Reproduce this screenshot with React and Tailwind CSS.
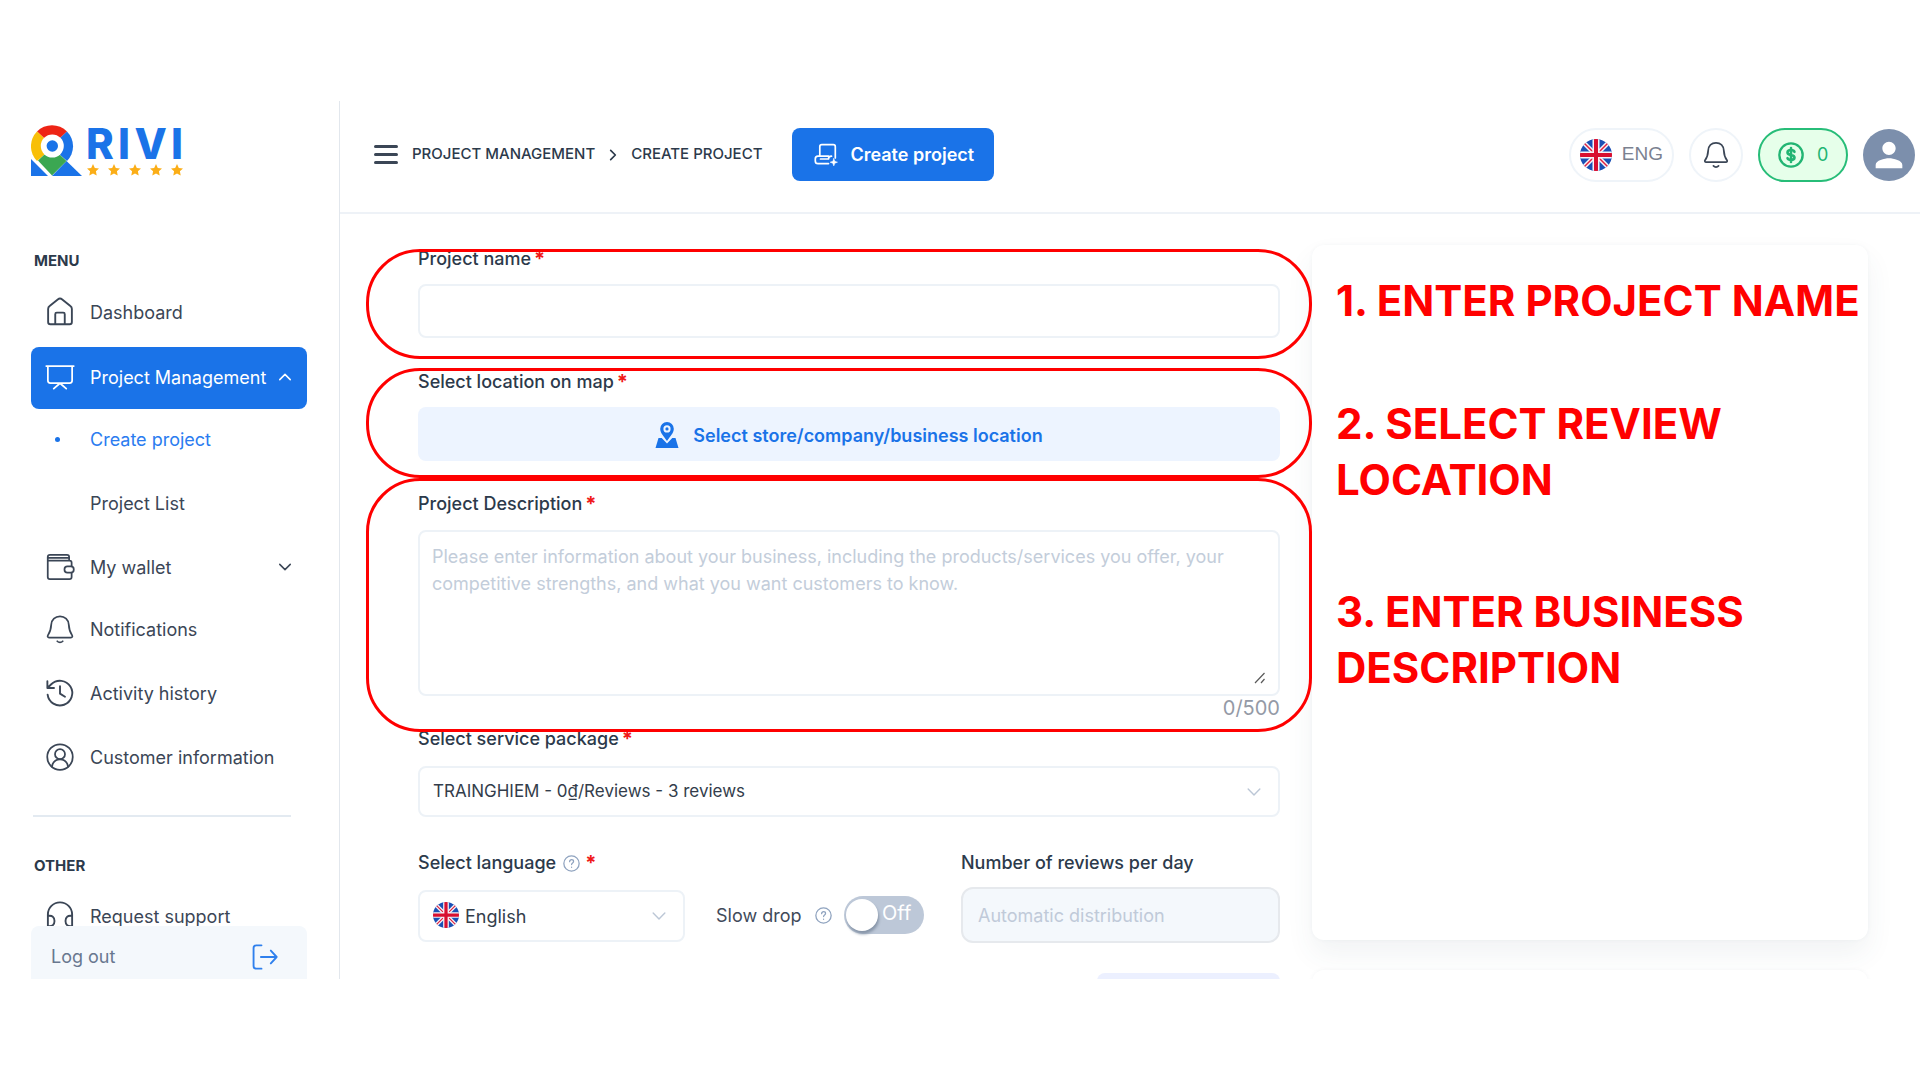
import React, { useState } from "react";

const STAR = "M6 0 7.8 3.9 12 4.4 8.9 7.3 9.7 11.5 6 9.4 2.3 11.5 3.1 7.3 0 4.4 4.2 3.9Z";

function Icon({ size = 26, width = 1.5, className = "", children, viewBox = "0 0 24 24" }) {
  return (
    <svg
      width={size}
      height={size}
      viewBox={viewBox}
      fill="none"
      stroke="currentColor"
      strokeWidth={width}
      strokeLinecap="round"
      strokeLinejoin="round"
      className={`shrink-0 ${className}`}
      aria-hidden="true"
    >
      {children}
    </svg>
  );
}

const icons = {
  home: (
    <Icon size={30}>
      <path d="M2.5 9.5c0-1 .4-1.700 1.200-2.300l6.500-5.200c1.100-.9 2.500-.9 3.600 0l6.500 5.200c.8.600 1.200 1.300 1.200 2.300V20c0 1.100-.7 1.800-1.800 1.800H4.300c-1.100 0-1.800-.7-1.800-1.800V9.500Z" />
      <path d="M8.200 21.700v-8c0-.7.500-1.200 1.200-1.200h5.200c.7 0 1.200.5 1.200 1.200v8" />
    </Icon>
  ),
  board: (
    <Icon size={30} width={1.400}>
      <path d="M1 3.200h22M2.300 3.400v11.400c0 1.300.7 2 2 2h15.400c1.300 0 2-.7 2-2V3.400M12 17l-5 4.300M12 17l5 4.300" />
    </Icon>
  ),
  wallet: (
    <Icon size={30} width={1.400}>
      <path d="M2.200 4.500V20c0 1 .6 1.700 1.700 1.700h15.700c1.100 0 1.700-.7 1.700-1.700v-3.200M21.300 11.200V8.500c0-1-.6-1.700-1.700-1.700H2.600M2.200 6.500V4c0-1.100.7-1.800 1.800-1.800h13.600c1 0 1.700.7 1.700 1.700v2.900M2.600 4.600h16" />
      <rect x="15.600" y="11.400" width="7.400" height="5" rx="2.300" />
    </Icon>
  ),
  bell: (
    <Icon size={30} width={1.400}>
      <path d="M12 1.800c-3.900 0-6.800 2.800-7 6.600-.2 4-1 6.200-2.700 8.700-.5.800 0 1.700.9 1.700h17.600c.9 0 1.400-.9.900-1.700-1.700-2.500-2.500-4.700-2.700-8.700-.2-3.800-3.100-6.600-7-6.600Z" />
      <path d="M9.800 21.800c1.200 1.200 3.200 1.200 4.400 0" />
    </Icon>
  ),
  history: (
    <Icon size={30} width={1.500}>
      <path d="M2.100 13.300A9.900 9.900 0 1 0 5 5L1.900 8M1.900 2.500V8h5.300M12 6.500v6l4 2.500" />
    </Icon>
  ),
  user: (
    <Icon size={30} width={1.400}>
      <circle cx="12" cy="12" r="10.200" />
      <circle cx="12" cy="9.700" r="4" />
      <path d="M5.500 19.800c.6-3.500 3-6 6.500-6s5.900 2.500 6.500 6" />
    </Icon>
  ),
  support: (
    <Icon size={30} width={1.500}>
      <path d="M2.300 18.500V10.800a9.700 9.700 0 0 1 19.400 0V21M2.300 12c3.500-.7 5.300.8 5.300 4s-1.800 4.500-5.300 4V12ZM21.700 12c-3.500-.7-5.300.8-5.300 4s1.800 4.500 5.300 4" />
    </Icon>
  ),
};

function Flag({ size }) {
  return (
    <svg width={size} height={size} viewBox="0 0 32 32" className="shrink-0" role="img" aria-label="United Kingdom">
      <clipPath id={`flag-${size}`}>
        <circle cx="16" cy="16" r="16" />
      </clipPath>
      <g clipPath={`url(#flag-${size})`}>
        <path d="M0 0h32v32H0z" fill="#1a50b5" />
        <path d="M2 2l28 28M30 2 2 30" stroke="#f4f5fa" strokeWidth="4.500" />
        <path d="M2 2l28 28M30 2 2 30" stroke="#e0213f" strokeWidth="1.500" />
        <path d="M16 0v32M0 16h32" stroke="#f4f5fa" strokeWidth="7" />
        <path d="M16 0v32M0 16h32" stroke="#d80f30" strokeWidth="4" />
      </g>
    </svg>
  );
}

function Chevron({ className = "", size = 18, width = 2 }) {
  return (
    <Icon size={size} width={width} className={className}>
      <path d="m5 8.500 7 7 7-7" />
    </Icon>
  );
}

function Logo() {
  return (
    <a href="#home" aria-label="RIVI" className="flex w-fit items-start">
      <svg width="51" height="51" viewBox="0 0 51 51" aria-hidden="true">
        <path d="M0 34v17h17Z" fill="#1a73e8" />
        <path d="M35.500 36 51 51H21Z" fill="#1a73e8" />
        <path d="M6 6.500A21 21 0 0 1 36 6.500L28 14H14Z" fill="#ee2415" />
        <path d="M36 6.500a21 21 0 0 1 0 29.500L28 29V14Z" fill="#1a73e8" />
        <path d="M6 6.500a21 21 0 0 0 0 29.500L14 29V14Z" fill="#f8bf08" />
        <path d="M7 35.500 14 29h14l7.500 7L21 50.500Z" fill="#3ba752" />
        <circle cx="21.300" cy="21" r="11.500" fill="#fff" />
        <circle cx="21.300" cy="21" r="5.700" fill="#1a73e8" />
      </svg>
      <span className="ml-[4px] flex w-[98px] flex-col">
        <span className="flex h-[39px] items-center justify-between pr-[1px] pb-px font-['Inter'] text-[42px] leading-[38px] font-extrabold text-[#1a73e8]">
          <span>R</span>
          <span>I</span>
          <span>V</span>
          <span>I</span>
        </span>
        <svg width="98" height="12" viewBox="0 0 98 12" aria-hidden="true">
          {[1, 22, 43, 64, 85].map((x) => (
            <path key={x} d={STAR} transform={`translate(${x} 0)`} fill="#fbae17" />
          ))}
        </svg>
      </span>
    </a>
  );
}

function NavItem({ icon, label, chevron, active, sub }) {
  const tone = active ? "bg-[#1a73e8] text-white" : sub === "current" ? "text-[#2b7cf0]" : "text-[#3b4656]";
  return (
    <li>
      <a href="#" className={`flex h-[62px] items-center rounded-lg pr-[13px] pb-[2px] pl-[14px] ${tone}`}>
        <span className="flex w-[45px] shrink-0">
          {icon ? icons[icon] : null}
          {sub === "current" ? <span className="ml-[10px] size-[5px] rounded-full bg-[#1a73e8]" /> : null}
        </span>
        <span className="flex-1 whitespace-nowrap">{label}</span>
        {chevron === "up" ? <Chevron className="rotate-180" /> : null}
        {chevron === "down" ? <Chevron /> : null}
      </a>
    </li>
  );
}

function Sidebar() {
  return (
    <aside className="flex w-[340px] shrink-0 flex-col border-r border-[#e2e7ed] pr-8 pl-[31px] pt-6">
      <Logo />
      <nav className="min-h-0 flex-1 overflow-hidden pt-[73px] text-[18px]">
        <h2 className="pl-[3px] text-[15px] leading-6 font-bold text-[#2c3a4b]">MENU</h2>
        <ul className="mt-[9px] flex flex-col gap-[3px]">
          <NavItem icon="home" label="Dashboard" />
          <NavItem icon="board" label="Project Management" chevron="up" active />
        </ul>
        <ul className="flex flex-col gap-[2px]">
          <NavItem label="Create project" sub="current" />
          <NavItem label="Project List" sub="other" />
          <NavItem icon="wallet" label="My wallet" chevron="down" />
        </ul>
        <ul className="flex flex-col gap-[2px]">
          <NavItem icon="bell" label="Notifications" />
          <NavItem icon="history" label="Activity history" />
          <NavItem icon="user" label="Customer information" />
        </ul>
        <hr className="mt-[26px] mr-4 ml-[2px] border-t-2 border-[#e3eaf1]" />
        <h2 className="mt-[37px] pl-[3px] text-[15px] leading-6 font-bold text-[#2c3a4b]">OTHER</h2>
        <ul className="mt-2">
          <NavItem icon="support" label="Request support" />
        </ul>
      </nav>
      <button type="button" className="flex h-[53px] shrink-0 items-center justify-between rounded-t-lg bg-[#f4f8fc] pt-2 pr-7 pl-5 text-[18px] text-[#68778f]">
        Log out
        <Icon size={28} width={1.600} className="text-[#2f80ed]">
          <path d="M9 2H4.500C3 2 2.200 2.800 2.200 4.300v15.400c0 1.500.8 2.300 2.300 2.300H9M8.500 12H22M17 6.500l5 5.500-5 5.500" />
        </Icon>
      </button>
    </aside>
  );
}

function Header() {
  return (
    <header className="flex h-[113px] shrink-0 items-center border-b-2 border-[#eef2f7] pr-[5px] pb-1 pl-[34px]">
      <button type="button" aria-label="Toggle menu" className="flex w-[24px] shrink-0 flex-col gap-[5px] text-[#3b4656]">
        <span className="h-[3px] rounded bg-current" />
        <span className="h-[3px] rounded bg-current" />
        <span className="h-[3px] rounded bg-current" />
      </button>
      <nav aria-label="Breadcrumb" className="ml-[14px] flex items-center text-[15px] font-medium whitespace-nowrap text-[#2c3a4b]">
        <a href="#projects">PROJECT MANAGEMENT</a>
        <Chevron size={16} width={2.500} className="mx-[10px] -rotate-90" />
        <span>CREATE PROJECT</span>
      </nav>
      <button type="button" className="ml-[30px] flex h-[53px] items-center gap-3 rounded-lg bg-[#1a73e8] pr-5 pl-[22px] text-[18px] font-semibold whitespace-nowrap text-white">
        <Icon size={24} width={1.700}>
          <path d="M5.800 13V3.700c0-1.300.7-2 2-2h11.500c1.300 0 2 .7 2 2V15M14.500 13.200H4c-1.800 0-2.700.9-2.700 2.700v2c0 1.800.9 2.700 2.700 2.700h10.500M17.500 13.200c-2 0-3 .8-3 2.800H6.500" />
          <path d="m19.800 15.500 1 2.700 2.700 1-2.700 1-1 2.700-1-2.700-2.700-1 2.700-1Z" fill="currentColor" strokeWidth=".5" />
        </Icon>
        Create project
      </button>
      <div className="ml-auto flex items-center gap-[15px]">
        <button type="button" className="flex h-[54px] items-center gap-[10px] rounded-full border-2 border-[#eff4f9] px-[9px] font-['Liberation_Sans'] text-[19px] text-[#7b8190]">
          <Flag size={32} />
          ENG
        </button>
        <button type="button" aria-label="Notifications" className="flex size-[54px] items-center justify-center rounded-full border-2 border-[#eff4f9] text-[#3b4656]">
          <Icon size={28} width={1.500}>
            <path d="M12 1.500c-3.900 0-6.500 2.800-6.700 6.600-.2 4-1 6.200-2.700 8.400-.5.800 0 1.700.9 1.700h17c.9 0 1.400-.9.900-1.700-1.700-2.200-2.500-4.400-2.700-8.400-.2-3.800-2.800-6.600-6.700-6.600Z" />
            <path d="M9.800 21.400c1.200 1.200 3.200 1.200 4.400 0" />
          </Icon>
        </button>
        <button type="button" className="flex h-[54px] w-[90px] items-center gap-[12px] rounded-full border-2 border-[#27bd78] bg-[#e6ffea] pl-[17px] text-[18px] text-[#22b573]">
          <Icon size={28} width={2}>
            <circle cx="12" cy="12" r="10" />
            <path d="M15 9.300c-.3-1-1.400-1.600-3-1.600-1.800 0-3 .8-3 2.100s1.100 1.900 3 2.200c1.900.3 3 .9 3 2.200s-1.200 2.100-3 2.100c-1.600 0-2.700-.6-3-1.600M12 6v12" strokeWidth="2.200" />
          </Icon>
          0
        </button>
        <button type="button" aria-label="Account" className="flex size-[52px] items-center justify-center rounded-full bg-[#7c8fac] text-white">
          <svg width="40" height="40" viewBox="0 0 24 24" fill="currentColor" aria-hidden="true">
            <path d="M12 12c2.200 0 4-1.800 4-4s-1.800-4-4-4-4 1.800-4 4 1.800 4 4 4Zm0 2c-2.700 0-8 1.300-8 4v2h16v-2c0-2.700-5.300-4-8-4Z" />
          </svg>
        </button>
      </div>
    </header>
  );
}

function Required() {
  return <span className="ml-[3px] text-[20px] font-bold text-[#f01818]">*</span>;
}

function Help() {
  return (
    <svg width="17" height="17" viewBox="0 0 20 20" fill="none" stroke="#8fa3bf" strokeWidth="1.500" strokeLinecap="round" className="shrink-0" aria-label="Help" role="img">
      <circle cx="10" cy="10" r="9" />
      <path d="M7.800 7.800c0-1.400 1-2.300 2.300-2.300s2.300.8 2.300 2.100c0 1.700-2.300 1.700-2.300 3.600M10.100 14.300v.2" />
    </svg>
  );
}

/* Red outline that calls out one step of the form. */
function Callout({ className }) {
  return <div aria-hidden="true" className={`pointer-events-none absolute -right-[32px] -left-[52px] z-10 rounded-[54px] border-[3px] border-[#ff0000] ${className}`} />;
}

const labelClass = "flex h-6 items-center text-[18px] leading-6 font-medium whitespace-nowrap text-[#2c3a4b]";

function ProjectForm() {
  const [text, setText] = useState("");
  return (
    <form className="flex flex-col pt-[33px]">
      <div className="relative">
        <Callout className="top-[2px] -bottom-[21px]" />
        <label htmlFor="name" className={labelClass}>Project name<Required /></label>
        <input id="name" type="text" className="mt-[13px] block h-[54px] w-full rounded-lg border-2 border-[#edf2f7] px-3 text-[18px] outline-none" />
      </div>
      <div className="relative mt-8">
        <Callout className="-top-[2px] -bottom-[17px]" />
        <label htmlFor="place" className={labelClass}>Select location on map<Required /></label>
        <button id="place" type="button" className="mt-[13px] flex h-[54px] w-full items-center justify-center gap-[14px] rounded-lg bg-[#edf4ff] pt-[2px] text-[18px] font-semibold text-[#1a73e8]">
          <svg width="24" height="28" viewBox="0 0 24 28" fill="currentColor" className="shrink-0" aria-hidden="true">
            <path fillRule="evenodd" d="M12 1a6.800 6.800 0 0 0-6.800 6.800c0 4 3.400 7.500 6.800 12.200 3.400-4.700 6.800-8.200 6.800-12.200A6.800 6.800 0 0 0 12 1Zm0 3.300a3.600 3.600 0 1 1 0 7.200 3.600 3.600 0 0 1 0-7.200Z" />
            <circle cx="12" cy="7.900" r="1.600" />
            <path d="M3.500 17h3.200L12 22.500l5.300-5.500h3.200L23.500 27H.5Z" />
          </svg>
          Select store/company/business location
        </button>
      </div>
      <div className="relative mt-[31px]">
        <Callout className="-top-[14px] -bottom-[9px]" />
        <label htmlFor="about" className={labelClass}>Project Description<Required /></label>
        <div className="relative mt-[14px]">
          <textarea
            id="about"
            maxLength={500}
            value={text}
            onChange={(e) => setText(e.target.value)}
            placeholder="Please enter information about your business, including the products/services you offer, your competitive strengths, and what you want customers to know."
            className="block h-[166px] w-full resize-none rounded-lg border-2 border-[#edf2f7] px-3 py-[11px] text-[18px] leading-[27px] outline-none placeholder:text-[#c3cdda]"
          />
          <svg width="12" height="12" viewBox="0 0 12 12" stroke="#5a5a5a" strokeWidth="1.200" className="absolute right-[14px] bottom-[12px]" aria-hidden="true">
            <path d="M1 11 10.500 1M7 11l3.500-4" />
          </svg>
        </div>
        <p className="flex h-[27px] items-center justify-end pb-[3px] text-[20px] text-[#949aa6]">{text.length}/500</p>
      </div>
      <div className="mt-1">
        <label htmlFor="package" className={labelClass}>Select service package<Required /></label>
        <div className="relative mt-[15px]">
          <select id="package" className="block h-[51px] w-full appearance-none rounded-lg border-2 border-[#edf2f7] bg-white px-[13px] text-[17px] text-[#333d4b] outline-none">
            <option>TRAINGHIEM - 0₫/Reviews - 3 reviews</option>
          </select>
          <Chevron size={20} width={1.700} className="pointer-events-none absolute top-4 right-4 text-[#bcc7d6]" />
        </div>
      </div>
      <div className="mt-[34px] flex items-start">
        <div className="w-[267px]">
          <label htmlFor="language" className={labelClass}>
            Select language
            <span className="mr-[2px] ml-[7px] flex"><Help /></span>
            <Required />
          </label>
          <div className="relative mt-[15px]">
            <select id="language" className="block h-[52px] w-full appearance-none rounded-lg border-2 border-[#edf2f7] bg-white pl-[45px] text-[18px] text-[#333d4b] outline-none">
              <option>English</option>
            </select>
            <span className="pointer-events-none absolute top-[12px] left-[15px]"><Flag size={26} /></span>
            <Chevron size={20} width={1.700} className="pointer-events-none absolute top-4 right-4 text-[#bcc7d6]" />
          </div>
        </div>
        <div className="mt-[45px] ml-[31px] flex items-center text-[18px] text-[#3f4a5a]">
          <label htmlFor="slow" className="w-[99px] whitespace-nowrap">Slow drop</label>
          <Help />
          <span className="relative ml-3 flex h-[38px] w-[80px] items-center rounded-full bg-[#bdc8d8]">
            <input id="slow" type="checkbox" role="switch" className="peer absolute inset-0 z-10 cursor-pointer opacity-0" />
            <span className="ml-[2px] size-[32px] shrink-0 rounded-full bg-white shadow-[1px_3px_3px_#8795a8]" />
            <span className="ml-1 pb-[5px] text-[20px] text-white">Off</span>
          </span>
        </div>
        <div className="ml-auto w-[319px]">
          <label htmlFor="perday" className={labelClass}>Number of reviews per day</label>
          <input id="perday" disabled placeholder="Automatic distribution" className="mt-3 block h-[56px] w-full rounded-xl border-2 border-[#e6e9ed] bg-[#f4f8fc] px-[15px] text-[18px] placeholder:text-[#c0cad9]" />
        </div>
      </div>
      <button type="button" aria-label="Continue" className="mt-[30px] h-12 w-[183px] self-end rounded-lg bg-[#ecf0ff]" />
    </form>
  );
}

function Steps() {
  return (
    <div className="pt-[31px]">
      <section className="h-[695px] rounded-xl bg-white pt-[28px] pl-[24px] shadow-[0_0_4px_rgba(60,80,100,0.04),0_14px_28px_rgba(60,80,100,0.07)]">
        <ol className="flex flex-col text-[42px] leading-[56px] font-bold text-[#ff0000]">
          <li className="whitespace-nowrap">1. ENTER PROJECT NAME</li>
          <li className="mt-[67px]">2. SELECT REVIEW<br />LOCATION</li>
          <li className="mt-[76px]">3. ENTER BUSINESS<br />DESCRIPTION</li>
        </ol>
      </section>
      <section className="mt-[30px] h-20 rounded-xl bg-white shadow-[0_0_4px_rgba(60,80,100,0.05)]" />
    </div>
  );
}

export default function App() {
  return (
    <div className="h-screen bg-white py-[101px] font-['Inter',sans-serif]">
      <div className="flex h-full overflow-hidden">
        <Sidebar />
        <div className="flex min-w-0 flex-1 flex-col">
          <Header />
          <main className="grid min-h-0 flex-1 grid-cols-[minmax(0,862fr)_minmax(0,556fr)] gap-8 overflow-hidden pr-[52px] pl-[78px]">
            <ProjectForm />
            <Steps />
          </main>
        </div>
      </div>
    </div>
  );
}
